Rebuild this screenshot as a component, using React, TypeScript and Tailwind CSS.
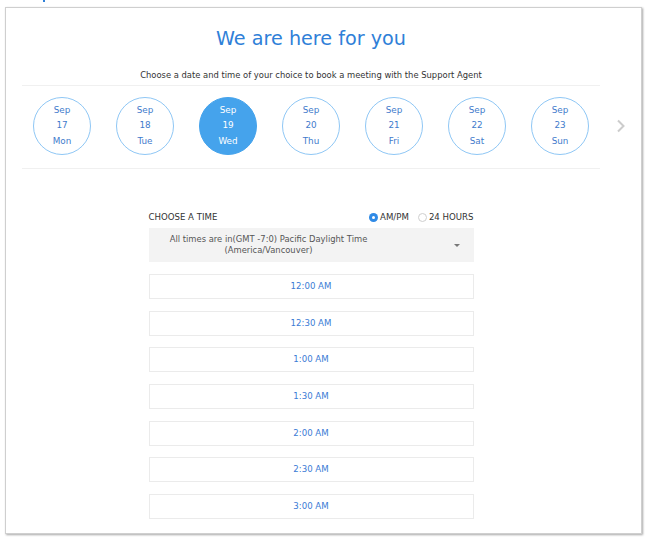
const days = [
  { d: "17", w: "Mon" },
  { d: "18", w: "Tue" },
  { d: "19", w: "Wed", active: true },
  { d: "20", w: "Thu" },
  { d: "21", w: "Fri" },
  { d: "22", w: "Sat" },
  { d: "23", w: "Sun" },
];

const slots = ["12:00 AM", "12:30 AM", "1:00 AM", "1:30 AM", "2:00 AM", "2:30 AM", "3:00 AM"];

const App = () => {
  return (
    <div className="w-[647px] h-[540px] bg-white font-['DejaVu_Sans',Verdana,sans-serif] overflow-hidden">
      <div className="h-[7px]">
        <div className="ml-[43px] w-[2px] h-[2px] bg-[#2f80d8]" />
      </div>
      <div className="ml-[5px] w-[637px] h-[527px] border border-[#cfcfcf] shadow-[1px_1px_2px_rgba(0,0,0,0.35)] flex">
        <div className="ml-[16px] w-[578px] flex flex-col">
          <div className="mt-[17px] text-center text-[19.2px] leading-[28px] text-[#2f80d8]">
            We are here for you
          </div>
          <div className="mt-[16px] pb-[4px] border-b border-[#f0f0f0] text-center text-[8.4px] leading-[12px] text-[#333]">
            Choose a date and time of your choice to book a meeting with the Support Agent
          </div>
          <div className="mt-[11px] pb-[13px] border-b border-[#f0f0f0] flex justify-center gap-[25px]">
            {days.map((x) => (
              <div
                key={x.d}
                className={
                  x.active
                    ? "w-[58px] h-[58px] rounded-full bg-[#45a3ec] border border-[#45a3ec] flex flex-col items-center justify-center text-[8.8px] leading-[15.5px] text-white"
                    : "w-[58px] h-[58px] rounded-full border border-[#8fc7f5] flex flex-col items-center justify-center text-[8.8px] leading-[15.5px] text-[#3f7bcc]"
                }
              >
                <span>Sep</span>
                <span>{x.d}</span>
                <span>{x.w}</span>
              </div>
            ))}
          </div>
          <div className="mt-[42px] mx-auto w-[325px] flex flex-col">
            <div className="flex items-center justify-between text-[8.6px] leading-[12px] text-[#333]">
              <span>CHOOSE A TIME</span>
              <div className="flex items-center">
                <span className="w-[9px] h-[9px] rounded-full bg-[#2f8ae6] flex items-center justify-center">
                  <span className="w-[3px] h-[3px] rounded-full bg-white" />
                </span>
                <span className="ml-[2px]">AM/PM</span>
                <span className="ml-[9px] w-[9px] h-[9px] rounded-full border border-[#cfcfcf]" />
                <span className="ml-[2px]">24 HOURS</span>
              </div>
            </div>
            <div className="mt-[5px] h-[34px] bg-[#f3f3f3] flex items-center text-[8.4px] leading-[11px] text-[#555]">
              <div className="w-[240px] text-center">
                All times are in(GMT -7:0) Pacific Daylight Time
                <br />
                (America/Vancouver)
              </div>
              <span className="ml-auto mr-[14px] w-0 h-0 border-l-[3px] border-r-[3px] border-t-[3px] border-l-transparent border-r-transparent border-t-[#777]" />
            </div>
            <div className="mt-[12px] flex flex-col gap-[11.7px]">
              {slots.map((s) => (
                <div
                  key={s}
                  className="h-[25px] border border-[#ebebeb] flex items-center justify-center text-[8.6px] text-[#3a7bd5]"
                >
                  {s}
                </div>
              ))}
            </div>
          </div>
        </div>
        <div className="flex-1 flex justify-center pt-[111px]">
          <svg width="10" height="14" viewBox="0 0 10 14">
            <path d="M2 1.5 L7.5 7 L2 12.5" fill="none" stroke="#cccccc" strokeWidth="2" />
          </svg>
        </div>
      </div>
    </div>
  );
};

export default App;
